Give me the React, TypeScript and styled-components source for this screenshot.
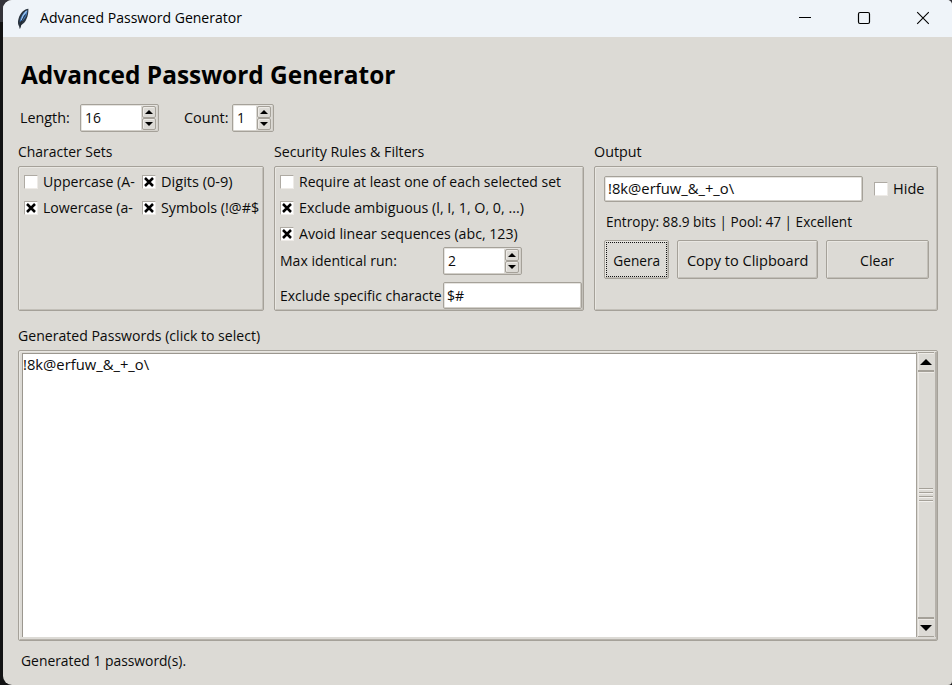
import React from "react";
import styled, { createGlobalStyle } from "styled-components";

const GlobalStyle = createGlobalStyle`
  * { box-sizing: border-box; }
  body {
    margin: 0;
    overflow: hidden;
    background: #121213;
    font-family: "Open Sans", "Noto Sans", sans-serif;
    font-size: 15px;
    line-height: 20px;
    color: #0b0b0b;
  }
`;

const Desktop = styled.div`
  height: 685px;
  padding-left: 3px;
  background: linear-gradient(#34343a 0 22px, #121213 22px);
`;

const Window = styled.div`
  height: 685px;
  border-radius: 9px 5px 4px 9px;
  overflow: hidden;
  background: #dcdad5;
`;

const TitleBar = styled.header`
  display: flex;
  align-items: center;
  height: 37px;
  padding: 0 22px 0 13px;
  background: #eff4f9;
  color: #000;
`;

const TitleText = styled.div`
  flex: 1;
  padding: 0 0 4px 10px;
`;

const WindowControls = styled.div`
  display: flex;
  gap: 45px;
  padding-bottom: 1px;
`;

const Text = styled.span<{ $x?: number }>`
  display: inline-block;
  white-space: pre;
  transform: scaleX(${(p) => p.$x ?? 0.94});
  transform-origin: left center;
`;

const CenteredText = styled(Text)`
  transform-origin: center;
`;

const Content = styled.main`
  padding: 20px 14px 0 15px;
`;

const Heading = styled.h1`
  margin: 0 0 0 3px;
  height: 34px;
  font-size: 25px;
  line-height: 34px;
  font-weight: 700;
  color: #000;
`;

const Settings = styled.div`
  display: flex;
  align-items: center;
  height: 28px;
  margin: 13px 0 0 2px;
`;

const SettingLabel = styled.label<{ $w: number; $indent?: number }>`
  width: ${(p) => p.$w}px;
  height: 22px;
  padding-left: ${(p) => p.$indent ?? 0}px;
`;

const Field = styled.div<{ $w: number; $h?: number; $pad?: number }>`
  display: flex;
  align-items: center;
  flex: none;
  width: ${(p) => p.$w}px;
  height: ${(p) => p.$h ?? 28}px;
  padding: 0 1px 0 ${(p) => p.$pad ?? 4}px;
  border: 1px solid #a5a199;
  border-radius: 2px;
  background: #fff;
  box-shadow: inset -1px -1px #d3d0ca, inset 1px 1px #e6e4e0;
`;

const FieldValue = styled.div`
  flex: 1;
  height: 22px;
`;

const Arrows = styled.div`
  display: flex;
  flex-direction: column;
  width: 16px;
  height: 24px;
  padding: 0 1px;
  background: #dcdad5;
`;

const ArrowButton = styled.div`
  display: flex;
  flex: 1;
  align-items: center;
  justify-content: center;
  border: 1px solid #a5a199;
  border-radius: 2px;
  background: #dcdad5;
  box-shadow: inset 1px 1px #eeebe7;
`;

const Panels = styled.div`
  display: grid;
  grid-template-columns: 246px 310px 344px;
  column-gap: 10px;
  margin-top: 9px;
`;

const PanelTitle = styled.div`
  height: 25px;
`;

const frame = `
  border: 1px solid #a5a199;
  border-radius: 2px;
  box-shadow: inset 1px 1px #e9e7e2, inset -1px -1px #c2bfb8;
`;

const Panel = styled.section<{ $pad: string }>`
  height: 145px;
  padding: ${(p) => p.$pad};
  ${frame}
`;

const CheckGrid = styled.div`
  display: grid;
  grid-template-columns: 111px 117px;
  column-gap: 7px;
`;

const CheckRow = styled.div`
  display: flex;
  height: 26px;
  overflow: hidden;
`;

const Box = styled.div`
  display: flex;
  align-items: center;
  justify-content: center;
  flex: none;
  width: 14px;
  height: 14px;
  margin: 4px 5px 0 0;
  background: #fff;
  border: 1px solid #eeebe7;
  border-top-color: #aeaaa3;
  border-left-color: #aeaaa3;
`;

const FormRow = styled.div<{ $h: number; $top?: number }>`
  display: flex;
  align-items: center;
  height: ${(p) => p.$h}px;
  margin-top: ${(p) => p.$top ?? 0}px;
`;

const FormLabel = styled.label`
  width: 162px;
  height: 22px;
  overflow: hidden;
  margin-right: 1px;
`;

const OutputRow = styled.div`
  display: flex;
  height: 26px;
  gap: 11px;
`;

const HideCheck = styled(CheckRow)`
  padding-top: 2px;
`;

const Entropy = styled.div`
  height: 20px;
  margin: 9px 0 0 2px;
`;

const Buttons = styled.div`
  display: grid;
  grid-template-columns: 65px 141px 103px;
  column-gap: 8px;
  height: 39px;
  margin-top: 9px;
`;

const Button = styled.div<{ $focus?: boolean }>`
  display: flex;
  align-items: center;
  justify-content: center;
  ${frame}
  ${(p) =>
    p.$focus &&
    `outline: 1px dotted #111; outline-offset: -3px;`}
`;

const ListTitle = styled.div`
  height: 25px;
  margin-top: 14px;
`;

const ListFrame = styled.section`
  display: flex;
  height: 291px;
  padding: 2px 1px 3px 3px;
  border: 1px solid #a5a199;
  border-radius: 2px;
  box-shadow: inset 1px 1px #e9e7e2, inset -1px -1px #b5b1aa;
`;

const List = styled.div`
  flex: 1;
  background: #fff;
  border-left: 1px solid #9b978f;
  border-top: 1px solid #9b978f;
`;

const Scrollbar = styled.div`
  display: flex;
  flex-direction: column;
  width: 20px;
  margin: -1px 0 0;
  padding: 0 1px;
  border-left: 1px solid #a5a199;
  border-right: 1px solid #b5b1aa;
`;

const ScrollArrow = styled.div`
  display: flex;
  align-items: center;
  justify-content: center;
  height: 19px;
  border: 1px solid #a5a199;
  border-width: 1px 0;
  box-shadow: inset 1px 1px #eeebe7;
`;

const Thumb = styled.div`
  display: flex;
  flex: 1;
  flex-direction: column;
  align-items: center;
  justify-content: center;
  gap: 2px;
  border: 1px solid #a5a199;
  border-width: 1px 0;
  box-shadow: inset 1px 1px #eeebe7;
`;

const Grip = styled.div`
  width: 14px;
  height: 2px;
  border-top: 1px solid #a5a199;
  border-bottom: 1px solid #f2f0ed;
  flex: none;
`;

const Status = styled.footer`
  margin: 9px 0 0 2.5px;
`;

const Feather = () => (
  <svg width="14" height="22" viewBox="0 0 14 22">
    <path d="M12.400 0.800C8.500 1 4 5 2.600 10.500c-.7 2.500-.9 4.800-.2 6.500L4 20l1.400-3C10 14.500 12.600 8 12.400.8z" fill="#2b3540" />
    <path d="M11.500 2C8 3.500 4.600 8 3.600 13.800l2.200-.7C9.600 10.800 11.300 6.500 11.500 2z" fill="#3f78bb" />
    <path d="M10.600 3C8 5.600 6.300 8.800 5.500 12" stroke="#9cc3ec" strokeWidth="1.300" fill="none" />
    <path d="M9.500 6.500C7 10 4.800 14 3.800 20.500" stroke="#1d252e" strokeWidth=".9" fill="none" />
  </svg>
);

const Cross = () => (
  <svg width="10" height="10" viewBox="0 0 10 10">
    <path d="M1 1L9 9M9 1L1 9" stroke="#000" strokeWidth="2.500" />
  </svg>
);

const Triangle = ({ down, w = 8, h = 4 }: { down?: boolean; w?: number; h?: number }) => (
  <svg width={w} height={h} viewBox="0 0 8 4" preserveAspectRatio="none">
    <path d={down ? "M0 0h8L4 4z" : "M0 4h8L4 0z"} fill="#000" />
  </svg>
);

const Spin = ({ w, value }: { w: number; value: string }) => (
  <Field $w={w}>
    <FieldValue>
      <Text $x={0.93}>{value}</Text>
    </FieldValue>
    <Arrows>
      <ArrowButton><Triangle /></ArrowButton>
      <ArrowButton><Triangle down /></ArrowButton>
    </Arrows>
  </Field>
);

const Check = ({ on, label, x }: { on?: boolean; label: string; x?: number }) => (
  <CheckRow>
    <Box>{on && <Cross />}</Box>
    <Text $x={x}>{label}</Text>
  </CheckRow>
);

export default function App() {
  const password = "!8k@erfuw_&_+_o\\";
  return (
    <Desktop>
      <GlobalStyle />
      <Window>
        <TitleBar>
          <Feather />
          <TitleText><Text $x={0.936}>Advanced Password Generator</Text></TitleText>
          <WindowControls>
            <svg width="14" height="14"><path d="M1 6.500h12" stroke="#000" /></svg>
            <svg width="14" height="14"><rect x="1.500" y="1.500" width="11" height="11" rx="1.500" fill="none" stroke="#000" strokeWidth="1.200" /></svg>
            <svg width="14" height="14"><path d="M1.200 1.200l11.600 11.600M12.800 1.200L1.200 12.800" stroke="#000" strokeWidth="1.100" /></svg>
          </WindowControls>
        </TitleBar>
        <Content>
          <Heading><Text $x={0.977}>Advanced Password Generator</Text></Heading>
          <Settings>
            <SettingLabel $w={60}><Text $x={0.955}>Length:</Text></SettingLabel>
            <Spin w={79} value="16" />
            <SettingLabel $w={73} $indent={25}><Text $x={0.965}>Count:</Text></SettingLabel>
            <Spin w={42} value="1" />
          </Settings>
          <Panels>
            <div>
              <PanelTitle><Text $x={0.93}>Character Sets</Text></PanelTitle>
              <Panel $pad="4px 5px">
                <CheckGrid>
                  <Check label="Uppercase (A-" />
                  <Check on label="Digits (0-9)" x={0.97} />
                  <Check on label="Lowercase (a-" />
                  <Check on label="Symbols (!@#$" x={0.955} />
                </CheckGrid>
              </Panel>
            </div>
            <div>
              <PanelTitle><Text $x={0.947}>Security Rules &amp; Filters</Text></PanelTitle>
              <Panel $pad="4px 1px 0 5px">
                <Check label="Require at least one of each selected set" x={0.932} />
                <Check on label="Exclude ambiguous (l, I, 1, O, 0, ...)" x={0.953} />
                <Check on label="Avoid linear sequences (abc, 123)" x={0.944} />
                <FormRow $h={28} $top={-2}>
                  <FormLabel><Text $x={0.935}>Max identical run:</Text></FormLabel>
                  <Spin w={79} value="2" />
                </FormRow>
                <FormRow $h={27} $top={7}>
                  <FormLabel><Text $x={0.93}>Exclude specific characte</Text></FormLabel>
                  <Field $w={139} $h={27} $pad={3}>
                    <FieldValue><Text>$#</Text></FieldValue>
                  </Field>
                </FormRow>
              </Panel>
            </div>
            <div>
              <PanelTitle><Text $x={0.955}>Output</Text></PanelTitle>
              <Panel $pad="9px 0 0 9px">
                <OutputRow>
                  <Field $w={259} $h={26} $pad={3}><FieldValue><Text $x={0.985}>{password}</Text></FieldValue></Field>
                  <HideCheck><Box /><Text $x={0.97}>Hide</Text></HideCheck>
                </OutputRow>
                <Entropy><Text $x={0.905}>Entropy: 88.9 bits | Pool: 47 | Excellent</Text></Entropy>
                <Buttons>
                  <Button $focus><CenteredText $x={0.91}>Genera</CenteredText></Button>
                  <Button><CenteredText $x={0.97}>Copy to Clipboard</CenteredText></Button>
                  <Button><CenteredText>Clear</CenteredText></Button>
                </Buttons>
              </Panel>
            </div>
          </Panels>
          <ListTitle><Text $x={0.938}>Generated Passwords (click to select)</Text></ListTitle>
          <ListFrame>
            <List><Text $x={0.985}>{password}</Text></List>
            <Scrollbar>
              <ScrollArrow><Triangle w={12} h={6} /></ScrollArrow>
              <Thumb><Grip /><Grip /><Grip /><Grip /></Thumb>
              <ScrollArrow><Triangle down w={12} h={6} /></ScrollArrow>
            </Scrollbar>
          </ListFrame>
          <Status><Text $x={0.925}>Generated 1 password(s).</Text></Status>
        </Content>
      </Window>
    </Desktop>
  );
}
